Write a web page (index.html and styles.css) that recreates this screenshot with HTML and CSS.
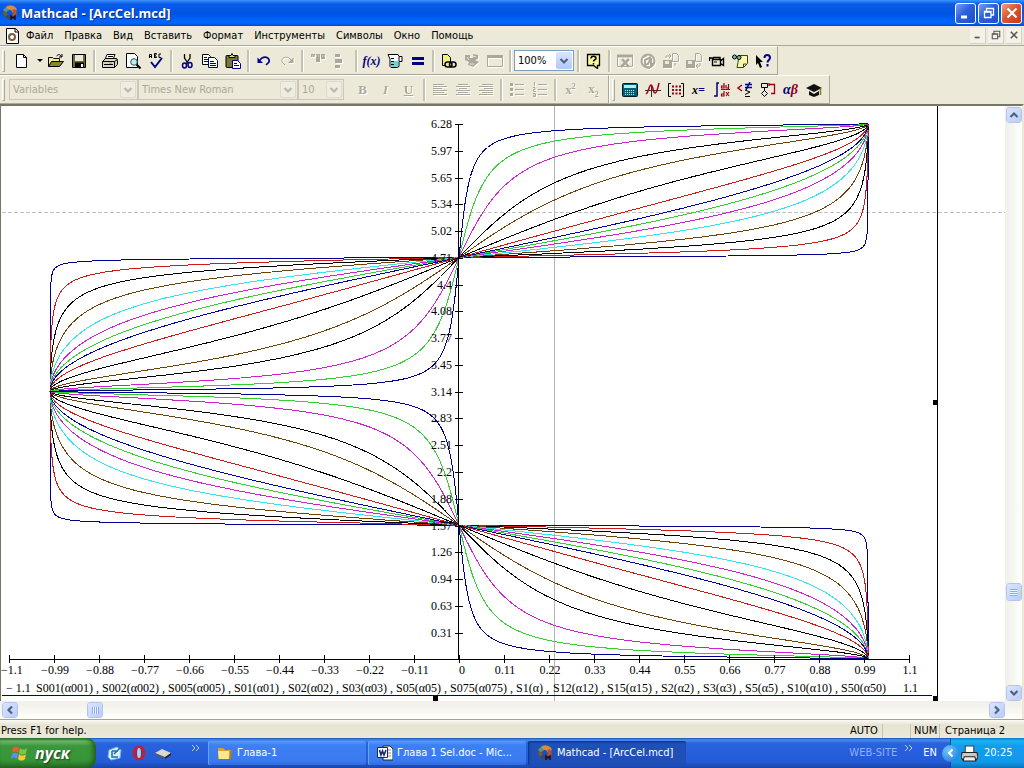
FILE: index.html
```html
<!DOCTYPE html>
<html lang="ru">
<head>
<meta charset="utf-8">
<title>Mathcad - [ArcCel.mcd]</title>
<link rel="stylesheet" href="styles.css">
</head>
<body>
<svg class="defs" aria-hidden="true">
  <symbol id="logo" viewBox="0 0 16 16">
    <path d="M3 12C0 8 1 3 5 2l3 3C5 5 4 8 6 10z" fill="#7a5a30"/>
    <path d="M4 2c4-3 10-1 11 3l-4 3C10 5 8 4 6 5z" fill="#e08b3c"/>
    <path d="M13 4c2 2 2 5 1 8l-4-2c1-1 2-3 0-5z" fill="#b8542c"/>
    <path d="M1 5l3-3 3 3-3 2z" fill="#4f9c8a"/>
    <path d="M3 11c1 3 4 4 7 3l-1-3c-1 0-2 0-3-1z" fill="#3c4a58"/>
    <path d="M9 15v-4l2 2 2-2v4" fill="none" stroke="#201008" stroke-width="1.500"/>
  </symbol>
  <symbol id="down" viewBox="0 0 10 10"><path d="M1.500 3L5 6.500 8.500 3" fill="none" stroke="currentColor" stroke-width="2.200"/></symbol>
  <symbol id="restore" viewBox="0 0 12 12"><path d="M3.500 4V1.500h7V8H8M3 1.500h8M1.500 4.500h6.500v6H1.500zM1 5h7" fill="none" stroke="currentColor" stroke-width="1.300"/></symbol>
  <symbol id="cross" viewBox="0 0 12 12"><path d="M1.500 1.500l9 9M10.500 1.500l-9 9" stroke="currentColor" stroke-width="2.200"/></symbol>
  <symbol id="more" viewBox="0 0 10 8"><path d="M1 1l3 3-3 3M5 1l3 3-3 3" fill="none" stroke="currentColor"/></symbol>
</svg>

<div class="window">
  <header class="titlebar">
    <svg class="ico"><use href="#logo"/></svg>
    <h1 class="title">Mathcad - [ArcCel.mcd]</h1>
    <button class="cap" aria-label="Свернуть"><svg viewBox="0 0 12 12"><path d="M1 10h6" stroke="#fff" stroke-width="3"/></svg></button>
    <button class="cap" aria-label="Восстановить"><svg><use href="#restore"/></svg></button>
    <button class="cap cap-close" aria-label="Закрыть"><svg><use href="#cross"/></svg></button>
  </header>

  <nav class="menubar">
    <svg class="ico" viewBox="0 0 16 16"><path d="M2.500.5h9l3 3v12h-12z" fill="#fff" stroke="#000"/><path d="M11 0v4h4" fill="none" stroke="#000"/><circle cx="8" cy="9" r="3" fill="none" stroke="#8a5a36" stroke-width="2"/><path d="M5 8l2-2" stroke="#4b7d70" stroke-width="2"/></svg>
    <button>Файл</button><button>Правка</button><button>Вид</button><button>Вставить</button><button>Формат</button><button>Инструменты</button><button>Символы</button><button>Окно</button><button>Помощь</button>
    <span class="fill"></span>
    <button class="mdi" aria-label="Свернуть документ"><svg viewBox="0 0 12 12"><path d="M2 9h6" stroke="currentColor" stroke-width="2"/></svg></button>
    <button class="mdi" aria-label="Восстановить документ"><svg><use href="#restore"/></svg></button>
    <button class="mdi" aria-label="Закрыть документ"><svg viewBox="-1 -1 14 14"><use href="#cross" width="12" height="12"/></svg></button>
  </nav>

  <div class="row">
    <div class="toolbar">
      <span class="grip"></span>
      <button class="tb" aria-label="Создать"><svg viewBox="0 0 16 16"><path d="M3.500 1.500h7l3 3v10h-10z" fill="#fff" stroke="#000"/><path d="M10.500 1.500v3h3" fill="none" stroke="#000"/></svg></button>
      <button class="tb drop" aria-label="Шаблоны"><svg viewBox="0 0 16 16"><path d="M5 6h6L8 9z"/></svg></button>
      <button class="tb" aria-label="Открыть"><svg viewBox="0 0 16 16"><path d="M.5 13.500v-9h4l1 1h6v3" fill="#f4ef8c" stroke="#000"/><path d="M.5 13.500l3-5h12l-4 5z" fill="#86862a" stroke="#000"/><path d="M8.500 3c2-2 4-2 5 1M11 4h3V1" fill="none" stroke="#000"/></svg></button>
      <button class="tb" aria-label="Сохранить"><svg viewBox="0 0 16 16"><path d="M1.500 1.500h13v13h-13z" fill="#6b6b35" stroke="#000"/><path d="M4 2h8v6H4z" fill="#e8e8dc"/><path d="M4 9.500h9v5H4z"/><path d="M10 11h2v3h-2z" fill="#fff"/></svg></button>
      <span class="sep"></span>
      <button class="tb" aria-label="Печать"><svg viewBox="0 0 16 16"><path d="M5 1.500h8l-2 5H3z" fill="#fff" stroke="#000"/><path d="M.5 8.500l3-3h11l1 2v4l-3 3H.5z" fill="#d5d3c4" stroke="#000"/><path d="M1 8.500h11.500v6M12.500 8.500l3-2M6 3.500h5M5 5.500h5M2 11.500h9" fill="none" stroke="#000"/><path d="M7 10h3" stroke="#aaa500"/></svg></button>
      <button class="tb" aria-label="Просмотр"><svg viewBox="0 0 16 16"><path d="M1.500.5h8l3 3v11h-11z" fill="#fff" stroke="#000"/><circle cx="9" cy="9" r="3.300" fill="#b8f0f0" stroke="#25555a"/><path d="M11.500 11.500l4 4" stroke="#000" stroke-width="2"/></svg></button>
      <button class="tb" aria-label="Орфография"><svg viewBox="0 0 16 16"><path d="M1.500 5V1.500h2V5M1.500 3.500h2M6.500 5V.5h2l-1 2 1 2h-2M13 1h-2v3.500h2" fill="none" stroke="#000"/><path d="M3 9l4 5 7-9" fill="none" stroke="#000088" stroke-width="2"/></svg></button>
      <span class="sep"></span>
      <button class="tb" aria-label="Вырезать"><svg viewBox="0 0 16 16"><path d="M5.500 1v4l4 6M11 1v4l-4 6" fill="none" stroke="#000" stroke-width="1.300"/><ellipse cx="5.500" cy="12.500" rx="2" ry="2.500" fill="none" stroke="#000088" stroke-width="1.500"/><ellipse cx="11" cy="12" rx="2" ry="2.500" fill="none" stroke="#000088" stroke-width="1.500"/></svg></button>
      <button class="tb" aria-label="Копировать"><svg viewBox="0 0 16 16"><path d="M.5 1.500h6l2 2v8h-8z" fill="#fff" stroke="#000"/><path d="M6.500 4.500h6l3 3v7h-9z" fill="#fff" stroke="#000088"/><path d="M2 4.500h3M2 6.500h4M2 8.500h4M8 8.500h4M8 10.500h6M8 12.500h6" stroke="#000088"/></svg></button>
      <button class="tb" aria-label="Вставка"><svg viewBox="0 0 16 16"><rect x="1" y="2.500" width="12" height="12" rx="1" fill="#77773a" stroke="#000"/><path d="M4 4.500V2.500h2l1-2 1 2h2v2z" fill="#e9e48a" stroke="#000"/><path d="M7.500 7.500h5l3 3v5h-8z" fill="#fff" stroke="#000088"/><path d="M9 10.500h3M9 12.500h5" stroke="#000088"/></svg></button>
      <span class="sep"></span>
      <button class="tb" aria-label="Отменить"><svg viewBox="0 0 16 16"><path d="M3 8l3-3c4-2 8 0 7 4l-3 3" fill="none" stroke="#000088" stroke-width="1.600"/><path d="M1.500 4.500V10H7z" fill="#000088"/></svg></button>
      <button class="tb off" aria-label="Повторить"><svg viewBox="0 0 16 16"><path d="M13 8l-3-3C6 3 2 5 3 9l3 3" fill="none" stroke="currentColor"/><path d="M14.500 4.500V10H9z" fill="currentColor"/></svg></button>
      <span class="sep"></span>
      <button class="tb off" aria-label="По горизонтали"><svg viewBox="0 0 16 16"><path d="M1 1h4v3H1zM6 1h4v8H6zM11 1h4v5h-4z" fill="currentColor"/><path d="M0 3h16" stroke="#ece9d8" stroke-dasharray="1 1"/></svg></button>
      <button class="tb off" aria-label="По вертикали"><svg viewBox="0 0 16 16"><path d="M2 1h5v3H2zM2 6h7v4H2zM2 12h5v3H2z" fill="currentColor"/></svg></button>
      <span class="sep"></span>
      <button class="tb fx" aria-label="Вставить функцию">f(x)</button>
      <button class="tb" aria-label="Единицы"><svg viewBox="0 0 16 16"><path d="M1 1.500h10l1 2h3v5h-3v5l-2 1H4l-1-1V6z" fill="#fff" stroke="#000"/><path d="M4 8h7v6H4z" fill="#60d8e0"/><path d="M4 5.500h3M4 8.500h3M4 11.500h3M12 4v4" stroke="#000"/></svg></button>
      <button class="tb" aria-label="Вычислить"><svg viewBox="0 0 16 16"><path d="M2 5.500h12M2 10.500h12" stroke="#000080" stroke-width="3"/></svg></button>
      <span class="sep"></span>
      <button class="tb" aria-label="Гиперссылка"><svg viewBox="0 0 16 16"><path d="M1.500 1.500h5l3 3v8h-8z" fill="#f6ee7a" stroke="#000"/><rect x="4" y="9" width="7" height="5" rx="2.500" fill="#eee9a8" stroke="#000" stroke-width="1.500"/><rect x="8.500" y="9" width="6.500" height="5" rx="2.500" fill="none" stroke="#000" stroke-width="1.500"/></svg></button>
      <button class="tb off" aria-label="Компонент"><svg viewBox="0 0 16 16"><path d="M1 2h5v3h3V1l5 1v4l-3 1 4 2-6 5-5-2 1-3-4-2z" fill="currentColor"/><path d="M3 4l2 3M9 3l3 1M6 11h4" stroke="#ece9d8" fill="none"/></svg></button>
      <button class="tb off" aria-label="Область"><svg viewBox="0 0 16 16"><path d="M.5 2.500h15v11H.5z" fill="none" stroke="currentColor"/><path d="M0 3.500h16" stroke="currentColor" stroke-width="3"/></svg></button>
      <span class="sep"></span>
      <label class="combo zoom"><select aria-label="Масштаб"><option>100%</option></select><span class="arrow"><svg><use href="#down"/></svg></span></label>
      <span class="sep"></span>
      <button class="tb" aria-label="Ресурсы"><svg viewBox="0 0 16 16"><path d="M1.500 1.500h12v11h-2v3l-4-3h-6z" fill="#fbf8a0" stroke="#000" stroke-width="1.300"/><path d="M5 5.500c0-3 5-3 5 0 0 1.500-2.500 1-2.500 3M7.500 10v1.500" fill="none" stroke="#000" stroke-width="1.500"/></svg></button>
      <span class="sep"></span>
      <button class="tb off" aria-label="Excel"><svg viewBox="0 0 16 16"><path d="M.5 2.500h15v11H.5z" fill="none" stroke="currentColor"/><path d="M0 3h16" stroke="currentColor" stroke-width="3"/><path d="M5 6l7 8M12 6l-8 8" stroke="currentColor" stroke-width="2.500"/></svg></button>
      <button class="tb off" aria-label="Axum"><svg viewBox="0 0 16 16"><circle cx="8" cy="8" r="6.500" fill="none" stroke="currentColor" stroke-width="2"/><path d="M11 4L5 7v5l3-1 3-6v7l3-2M3 4l4-2M5 14l5 1" fill="none" stroke="currentColor" stroke-width="2"/></svg></button>
      <button class="tb off" aria-label="Чтение файла"><svg viewBox="0 0 16 16"><path d="M0 7h9v8H0z" fill="currentColor"/><path d="M2 8h4v3H2z" fill="#ece9d8"/><path d="M9.500.5h4l2 2v6h-6zM3 5V3h5M6 1l2 2-2 2M12 10v3" fill="none" stroke="currentColor"/></svg></button>
      <button class="tb off" aria-label="Запись файла"><svg viewBox="0 0 16 16"><path d="M0 7h9v8H0z" fill="currentColor"/><path d="M2 8h4v3H2z" fill="#ece9d8"/><path d="M9.500.5h4l2 2v6h-6zM14 10v3h-4M12 11l-2 2 2 2" fill="none" stroke="currentColor"/></svg></button>
      <button class="tb" aria-label="Камера"><svg viewBox="0 0 16 16"><path d="M3.500 6.500h8v6h-8zM1 5h4M.5 4v4M11.500 8l3-2.500v7l-3-2M4 4.500h7v2" fill="none" stroke="#000" stroke-width="1.400"/><path d="M5 8h3v2H5z" fill="#808040"/></svg></button>
      <button class="tb" aria-label="Просмотр заметок"><svg viewBox="0 0 16 16"><path d="M7 2.500h8.500v8l-4 4H5l1-5z" fill="#fbf7a2" stroke="#3d3d20"/><path d="M11.500 14v-3h3" fill="none" stroke="#3d3d20"/><circle cx="2.500" cy="4" r="2" fill="#75c4ae" stroke="#000"/><circle cx="7" cy="4.500" r="2" fill="#75c4ae" stroke="#000"/></svg></button>
      <button class="tb" aria-label="Справка"><svg viewBox="0 0 16 16"><path d="M1 2l7 7H5l2 5-2 1-2-5-2 2z"/><path d="M9.500 5c0-4 5.500-4 5.500 0 0 2-2.500 2-2.500 4.500M12.500 11v2.500" fill="none" stroke="#000088" stroke-width="2"/></svg></button>
    </div>
  </div>

  <div class="row">
    <div class="toolbar">
      <span class="grip"></span>
      <label class="combo off style"><select disabled aria-label="Стиль"><option>Variables</option></select><span class="arrow"><svg><use href="#down"/></svg></span></label>
      <label class="combo off font"><select disabled aria-label="Шрифт"><option>Times New Roman</option></select><span class="arrow"><svg><use href="#down"/></svg></span></label>
      <label class="combo off size"><select disabled aria-label="Размер"><option>10</option></select><span class="arrow"><svg><use href="#down"/></svg></span></label>
      <span class="gap"></span>
      <button class="tb off glyph">B</button><button class="tb off glyph it">I</button><button class="tb off glyph un">U</button>
      <span class="sep"></span>
      <button class="tb off" aria-label="По левому краю"><svg viewBox="0 0 16 16"><path d="M1 2.500h11M1 4.500h14M1 6.500h9M1 8.500h14M1 10.500h11M1 12.500h14" stroke="currentColor"/></svg></button>
      <button class="tb off" aria-label="По центру"><svg viewBox="0 0 16 16"><path d="M3 2.500h10M1 4.500h14M4 6.500h8M1 8.500h14M3 10.500h10M1 12.500h14" stroke="currentColor"/></svg></button>
      <button class="tb off" aria-label="По правому краю"><svg viewBox="0 0 16 16"><path d="M4 2.500h11M1 4.500h14M6 6.500h9M1 8.500h14M4 10.500h11M1 12.500h14" stroke="currentColor"/></svg></button>
      <span class="sep"></span>
      <button class="tb off" aria-label="Маркеры"><svg viewBox="0 0 16 16"><path d="M1 1h3v3H1zM1 6h3v3H1zM1 11h3v3H1z" fill="currentColor"/><path d="M6 2.500h9M6 7.500h9M6 12.500h9" stroke="currentColor"/></svg></button>
      <button class="tb off" aria-label="Нумерация"><svg viewBox="0 0 16 16"><path d="M2.500 0v4M1 5.500h2v2H1.500v2H4M1 11.500h2.500v3H1M1 13h2M6 2.500h9M6 7.500h9M6 12.500h9" fill="none" stroke="currentColor"/></svg></button>
      <span class="sep"></span>
      <button class="tb off glyph plain" aria-label="Верхний индекс">x<sup>2</sup></button><button class="tb off glyph plain" aria-label="Нижний индекс">x<sub>2</sub></button>
    </div>
    <div class="toolbar math">
      <span class="grip"></span>
      <button class="tb" aria-label="Калькулятор"><svg viewBox="0 0 16 16"><rect x=".5" y="1.500" width="15" height="13" rx="1" fill="#00607c" stroke="#001c30"/><path d="M2 3h12v3H2z" fill="#b8ecea"/><path d="M3 8.500h10M3 10.500h10M3 12.500h10" stroke="#a8ecf0" stroke-dasharray="1 1"/></svg></button>
      <button class="tb" aria-label="График"><svg viewBox="0 0 16 16"><path d="M0 8.500h16M6.500 3v12" stroke="#303030"/><path d="M1 12c3-2 3-9 5-9s2 8 4 8 3-6 4-10" fill="none" stroke="#a00018" stroke-width="1.500"/></svg></button>
      <button class="tb" aria-label="Матрица"><svg viewBox="0 0 16 16"><path d="M3 1.500H.5v13H3M13 1.500h2.500v13H13" fill="none" stroke="#000"/><path d="M4 4.500h9M4 8h9M4 11.500h9" stroke="#900018" stroke-width="2" stroke-dasharray="2 1.500"/></svg></button>
      <button class="tb glyph eq" aria-label="Вычисление">x<span>=</span></button>
      <button class="tb" aria-label="Исчисление"><svg viewBox="0 0 16 16"><path d="M5 1H3v13H0" fill="none" stroke="#000080" stroke-width="1.500"/><path d="M7 7.500h9M10 1v5H7.500V4H10M12 3v3h2.500M14.500 2v5M10 9v5H7.500v-2H10M12 10l3 4M15 10l-3 4" fill="none" stroke="#a00018" stroke-width="1.200"/></svg></button>
      <button class="tb" aria-label="Логика"><svg viewBox="0 0 16 16"><path d="M5 3L1 6l4 3" fill="none" stroke="#a00018" stroke-width="1.500"/><path d="M8 2.500h7M8 5.500h7M13 0L9 8" stroke="#000080" stroke-width="1.500"/><path d="M8 8l5 2-5 2.500M8 14.500h5" fill="none" stroke="#000"/></svg></button>
      <button class="tb" aria-label="Программирование"><svg viewBox="0 0 16 16"><path d="M1.500 1.500h6v4h-6zM4.500 5.500V9M4.500 8.500l3 3-3 3-3-3z" fill="none" stroke="#000"/><path d="M9 2.500h5.500v9H11M9 1v3" fill="none" stroke="#a00018" stroke-width="1.300"/></svg></button>
      <button class="tb glyph greek" aria-label="Греческий алфавит">α<span>β</span></button>
      <button class="tb" aria-label="Символьная алгебра"><svg viewBox="0 0 16 16"><path d="M0 6l8-4 8 4-8 4zM3 9l5 3 5-3v4l-5 2-5-2z" fill="#111"/><path d="M14.500 6v7" stroke="#808030" stroke-width="1.500"/></svg></button>
    </div>
  </div>

  <main class="document">
    <svg class="plot" role="img" aria-label="График семейства кривых S(α)">
      <path class="guide" d="M554.500 0V596"/>
      <path class="guide pagebreak" d="M2 106.500H1005"/>
      <g id="curves" class="curves"></g>
      <path id="axes" class="axis"/>
      <g id="labels" class="labels"></g>
      <path class="under" d="M2 589.500H932"/>
      <path class="axis" d="M937.500 0V592"/>
      <path d="M933 294h5v5h-5zM933 590h5v5h-5zM433 590h5v5h-5z"/>
    </svg>
    <div class="vscroll">
      <button class="sb" aria-label="Вверх"><svg class="up"><use href="#down"/></svg></button>
      <span class="before"></span>
      <button class="sb thumb" aria-label="Ползунок"></button>
      <span class="after"></span>
      <button class="sb" aria-label="Вниз"><svg><use href="#down"/></svg></button>
    </div>
    <div class="hscroll">
      <button class="sb" aria-label="Влево"><svg class="left"><use href="#down"/></svg></button>
      <span class="before"></span>
      <button class="sb thumb" aria-label="Ползунок"></button>
      <span class="after"></span>
      <button class="sb" aria-label="Вправо"><svg class="right"><use href="#down"/></svg></button>
    </div>
  </main>

  <footer class="status"><span class="fill">Press F1 for help.</span><span class="cell auto">AUTO</span><span class="cell blank"></span><span class="cell num">NUM</span><span class="page">Страница 2</span></footer>

  <div class="taskbar">
    <button class="start"><svg viewBox="0 0 18 18"><path d="M2 4c2-2 4-2 6 0L7 9C5 7 3 7 1 9z" fill="#ef5b2b"/><path d="M9 4c2 2 5 2 7 0l-1 5c-2 2-5 2-7 0z" fill="#7fc742"/><path d="M1 10c2-2 4-2 6 0l-1 5c-2-2-4-2-6 0z" fill="#5b8ff0"/><path d="M8 10c2 2 5 2 7 0l-1 5c-2 2-5 2-7 0z" fill="#fbc92f"/></svg>пуск</button>
    <div class="quick">
      <button aria-label="Рабочий стол"><svg viewBox="0 0 16 16"><path d="M2 5l8-3 4 3-1 8-9 2-3-3z" fill="#dcf0fb" stroke="#6fb3ea"/><path d="M5 6h6M5 6v6h6M7 9l7-7" fill="none" stroke="#1b6fa8" stroke-width="1.500"/></svg></button>
      <button aria-label="Opera"><svg viewBox="0 0 16 16"><ellipse cx="8" cy="8" rx="5" ry="6" fill="#34488c" stroke="#c0203a" stroke-width="3"/><ellipse cx="8" cy="8" rx="2" ry="5" fill="#b9c6ee"/></svg></button>
      <button aria-label="Устройство"><svg viewBox="0 0 16 16"><path d="M0 8l7-4 9 4-6 5z" fill="#d9d9d2"/><path d="M0 8l10 4v2L1 10z" fill="#555"/><path d="M10 12l6-4v2l-6 4z" fill="#222"/></svg></button>
    </div>
    <svg class="more"><use href="#more"/></svg>
    <div class="tasks">
      <button class="task"><svg viewBox="0 0 16 16"><path d="M1 3h5l2 2h6v9H1z" fill="#d8a62c"/><path d="M1 6h11l1 8H2z" fill="#ffe98a"/><path d="M13 6h2l-1 8h-2z" fill="#a8801c"/></svg><span>Глава-1</span></button>
      <button class="task"><svg viewBox="0 0 16 16"><path d="M6 1h7l3 3v11H6z" fill="#fff" stroke="#222"/><path d="M8 5h6M8 8h6M8 11h6" stroke="#888"/><path d="M.5 2.500h10v10H.5z" fill="#fff" stroke="#15277a"/><path d="M2.500 5l1.500 5 1.500-4L7 10l2-5" fill="none" stroke="#15277a" stroke-width="1.600"/></svg><span>Глава 1 Sel.doc - Mic...</span></button>
      <button class="task active"><svg><use href="#logo"/></svg><span>Mathcad - [ArcCel.mcd]</span></button>
    </div>
    <span class="website">WEB-SITE</span>
    <svg class="more"><use href="#more"/></svg>
    <button class="lang">EN</button>
    <div class="tray">
      <button class="round" aria-label="Показать значки"><svg viewBox="0 0 10 10"><path d="M6.500 1.500L3 5l3.500 3.500" fill="none" stroke="#fff" stroke-width="2"/></svg></button>
      <svg class="printer" viewBox="0 0 16 16"><path d="M4 1h8v6H4z" fill="#fff" stroke="#444"/><path d="M1 7h14l1 5-2 2H2l-2-2z" fill="#c9c9cc" stroke="#222"/><path d="M3 11h10l1 4H2z" fill="#eee" stroke="#222"/></svg>
      <time>20:25</time>
    </div>
  </div>
</div>
<script src="plot.js"></script>
</body>
</html>
```
FILE: styles.css
```css
* { box-sizing: border-box; }
body {
  margin: 0;
  font-family: "DejaVu Sans Condensed", "Noto Sans", sans-serif;
  font-size: 11px;
  line-height: 14px;
  color: #000;
  background: #ece9d8;
}
button, select { font: inherit; color: inherit; margin: 0; }
button { border: 0; padding: 0; background: none; white-space: nowrap; }
svg { flex: none; display: block; }
.defs { width: 0; height: 0; position: absolute; }
.fill { flex: 1; }
.ico { width: 16px; height: 16px; }
.window { height: 100vh; display: flex; flex-direction: column; overflow: hidden; }

.titlebar {
  height: 26px; flex: none; display: flex; align-items: center; gap: 2px; padding: 0 2px 0 2px;
  background: linear-gradient(#3a93ff 0, #0a5ce8 4px, #0054e3 14px, #0063fa 20px, #0066ff 23px, #0148c8 26px);
}
.title {
  flex: 1; margin: 0; padding-left: 1px; color: #fff; text-shadow: 1px 1px #0b2c88;
  font: bold 13px/18px "Open Sans", "Noto Sans", sans-serif;
}
.cap {
  width: 21px; height: 21px; display: grid; place-items: center; border: 1px solid #fff; border-radius: 3px;
  color: #fff; background: linear-gradient(135deg, #7c9ff0, #2b5fdc 45%, #1c4fcf);
}
.cap svg { width: 12px; height: 12px; }
.cap-close { background: linear-gradient(135deg, #f0a080, #dd5630 45%, #c43a14); }

.menubar {
  height: 20px; flex: none; display: flex; align-items: center; gap: 11px; padding: 0 2px 0 4px;
  border-bottom: 1px solid #aca899;
}
.menubar .ico { margin-right: -5px; }
.menubar .mdi {
  width: 16px; height: 16px; margin-left: -9px; display: grid; place-items: center;
  color: #555; background: #f3f1e8; border-right: 1px solid #d5d2c2; border-bottom: 1px solid #d5d2c2;
}
.mdi svg { width: 10px; height: 10px; }

.row { height: 29px; flex: none; display: flex; }
.toolbar {
  display: flex; align-items: center; padding: 0 3px 0 2px;
  border-top: 1px solid #fff; border-right: 1px solid #aca899; border-bottom: 1px solid #aca899;
}
.math { padding-left: 2px; padding-right: 4px; border-left: 1px solid #fff; }
.grip { width: 3px; height: 22px; margin-right: 4px; border: 1px solid; border-color: #fff #aca899 #aca899 #fff; }
.math .grip { margin-right: 3px; }
.tb { width: 23px; height: 22px; flex: none; display: grid; place-items: center; }
.tb svg { width: 16px; height: 16px; }
.tb.drop { width: 12px; }
.tb.off { color: #aca899; filter: drop-shadow(1px 1px #fff); }
.sep { width: 8px; height: 22px; flex: none; display: flex; justify-content: center; }
.sep::before { content: ""; width: 2px; background: #c5c2b2; border-right: 1px solid #fff; }
.gap { width: 7px; }
.fx { font: italic bold 12px/16px "Liberation Serif", serif; color: #000080; }
.glyph { font: bold 13px/16px "Liberation Serif", serif; }
.it { font-style: italic; }
.un { text-decoration: underline; }
.plain { display: block; }
.plain sup, .plain sub { font-size: 8px; line-height: 8px; }
.eq { display: flex; align-items: center; justify-content: center; font-style: italic; font-size: 12px; }
.eq span { color: #000080; }
.greek { display: flex; align-items: center; justify-content: center; font-style: italic; font-size: 14px; color: #000080; }
.greek span { color: #900018; }

.combo { height: 21px; display: flex; align-items: stretch; background: #fff; border: 1px solid #7f9db9; }
.combo select {
  flex: 1; min-width: 0; padding: 0 3px; border: 0; appearance: none; background: none; outline: 0; opacity: 1;
}
.combo .arrow {
  width: 16px; margin: 1px; display: grid; place-items: center; border-radius: 2px; pointer-events: none;
  color: #4d6185; background: linear-gradient(#dbe5fe, #b4c8f6);
}
.arrow svg, .sb svg { width: 10px; height: 10px; }
.zoom { width: 60px; }
.style { width: 129px; }
.font { width: 160px; }
.size { width: 46px; }
.combo.off { background: #ece9d8; border-color: #c9c7ba; color: #aca899; }
.combo.off .arrow { color: #bcb9aa; background: #efede1; border: 1px solid #dddacb; }

.document {
  flex: 1; min-height: 0; display: grid; grid-template: 1fr 18px / 1fr 17px;
  border-top: 2px solid #77746a; border-right: 2px solid #ece9d8; background: #fff; box-shadow: inset 1px 0 #77746a;
}
.plot { width: 100%; height: 100%; min-height: 0; overflow: hidden; }
.plot path { shape-rendering: crispEdges; }
.guide { stroke: #b4b4b4; }
.pagebreak { stroke: #c0c0c0; stroke-dasharray: 4 2; }
.axis { fill: none; stroke: #000; }
.under { stroke: #000080; }
.curves path { fill: none; stroke-width: 1; }
.labels { font: 12px "Liberation Serif", serif; }
.vscroll { display: flex; flex-direction: column; align-items: center; padding: 1px 0 0; background: linear-gradient(90deg, #f0efe8, #fefefb); }
.hscroll { grid-column: 1 / 3; display: flex; align-items: center; padding: 0 17px 0 2px; background: linear-gradient(#f0efe8, #fefefb); }
.sb {
  width: 16px; height: 16px; flex: none; display: grid; place-items: center; border: 1px solid #fff; border-radius: 3px;
  outline: 1px solid #b3c5ee; outline-offset: -1px; color: #4d6185; background: linear-gradient(135deg, #dbe5fe, #b9ccf8);
}
.thumb::before { content: ""; width: 7px; height: 7px; background: repeating-linear-gradient(90deg, #8fabec 0 1px, #eef3ff 1px 2px); }
.vscroll .thumb { height: 18px; }
.vscroll .thumb::before { background: repeating-linear-gradient(#8fabec 0 1px, #eef3ff 1px 2px); }
.vscroll .before { flex: 460; }
.vscroll .after { flex: 84; }
.hscroll .before { flex: 69; }
.hscroll .after { flex: 885; }
.up { transform: rotate(180deg); }
.left { transform: rotate(90deg); }
.right { transform: rotate(-90deg); }

.status {
  height: 19px; flex: none; display: flex; align-items: center; padding: 3px 1px 0; border-top: 1px solid #a5a294;
  background: linear-gradient(#fbfaf4, #e6e3d2 5px, #ece9d8);
}
.cell { height: 14px; border-right: 1px solid #c8c5b4; }
.auto { width: 33px; }
.blank { width: 28px; }
.num { width: 29px; padding-left: 3px; }
.page { width: 83px; padding-left: 5px; }

.taskbar {
  height: 30px; flex: none; display: flex; align-items: center; color: #fff;
  background: linear-gradient(#1f4fb0 0, #4a8cf4 2px, #2a62dd 5px, #245bd8 24px, #1b44a6 30px);
}
.start {
  align-self: stretch; width: 96px; display: flex; align-items: center; gap: 6px; padding-left: 11px;
  border-radius: 0 9px 9px 0; box-shadow: inset -3px 0 5px #1f5d1f; text-shadow: 1px 1px 2px #153c15;
  background: linear-gradient(#2d772d 0, #6fbd6f 3px, #3c963c 8px, #379637 22px, #256a25 30px);
  font: italic bold 16px/20px "Open Sans", "Noto Sans", sans-serif;
}
.start svg { width: 18px; height: 18px; }
.quick { display: flex; gap: 8px; padding: 0 20px 0 11px; }
.quick svg { width: 16px; height: 16px; }
.more { width: 10px; height: 8px; align-self: flex-start; margin-top: 6px; color: #bcd3ff; }
.tasks { flex: 1; display: flex; gap: 2px; padding-left: 7px; }
.task {
  width: 158px; height: 24px; display: flex; align-items: center; gap: 4px; padding-left: 9px; border-radius: 2px;
  background: linear-gradient(#5c9bff, #3c80f3 4px, #3a7bef 20px, #2f6adf); box-shadow: inset 1px 0 #69a2ff;
}
.task svg { width: 16px; height: 16px; }
.active { background: #1e50b8; box-shadow: inset 1px 1px 2px #0c307c; }
.website { width: 55px; color: #8fb2f5; }
.lang { padding: 0 13px 0 9px; }
.tray {
  align-self: stretch; width: 74px; display: flex; align-items: center; gap: 2px;
  background: linear-gradient(#0c7cd0, #18b5f2 3px, #139ceb 8px, #129aea 24px, #0d70b8); border-left: 1px solid #0b4aa8;
}
.round { width: 17px; height: 17px; margin-left: -9px; display: grid; place-items: center; border-radius: 50%; background: radial-gradient(circle at 35% 30%, #6fc4ff, #1374dd); }
.round svg { width: 10px; height: 10px; }
.printer { width: 17px; height: 17px; }
.tray time { margin-left: 4px; }
```
FILE: plot.js
```js
// Family x = cos a / sqrt(cos^2 a + k^2 sin^2 a), a = 0 .. 2*pi, drawn as a against x.
const NS = "http://www.w3.org/2000/svg";
const X0 = 459, Y0 = 553, XS = 409, YS = 85.2;
const family = [
  [1 / 50, "#000090"], [1 / 10, "#d01818"], [1 / 5, "#000"], [1 / 3, "#6b4208"],
  [1 / 2, "#30e4f0"], [1 / 1.5, "#d020d0"], [1 / 1.2, "#30d030"], [1, "#0000a8"],
  [1 / 0.75, "#d01818"], [1 / 0.5, "#000"], [1 / 0.3, "#6b4208"], [1 / 0.2, "#000"],
  [1 / 0.1, "#d020d0"], [1 / 0.05, "#30d030"], [1 / 0.02, "#000090"]
];
const curves = document.getElementById("curves");
for (const [k, color] of family) {
  const points = [];
  for (let i = 0; i <= 1440; i++) {
    const a = i * Math.PI / 720;
    const c = Math.cos(a), s = Math.sin(a);
    points.push((X0 + XS * c / Math.hypot(c, k * s)).toFixed(1) + " " + (Y0 - YS * a).toFixed(1));
  }
  const path = document.createElementNS(NS, "path");
  path.setAttribute("d", "M" + points.join("L"));
  path.setAttribute("stroke", color);
  curves.append(path);
}

const labels = document.getElementById("labels");
function label(text, x, y, anchor) {
  const node = document.createElementNS(NS, "text");
  node.setAttribute("x", x);
  node.setAttribute("y", y);
  node.setAttribute("text-anchor", anchor);
  node.textContent = text;
  labels.append(node);
}

let axes = "M9 553.5H909M458.5 18V553";
const yValues = "6.28 5.97 5.65 5.34 5.02 4.71 4.4 4.08 3.77 3.45 3.14 2.83 2.51 2.2 1.88 1.57 1.26 0.94 0.63 0.31".split(" ");
yValues.forEach((value, i) => {
  const y = Math.round(18 + i * 26.77);
  axes += `M455 ${y + 0.5}H463`;
  label(value, 452, y + 4, "end");
});
const xValues = "−1.1 −0.99 −0.88 −0.77 −0.66 −0.55 −0.44 −0.33 −0.22 −0.11 0 0.11 0.22 0.33 0.44 0.55 0.66 0.77 0.88 0.99 1.1".split(" ");
xValues.forEach((value, i) => {
  const x = 9 + i * 45;
  axes += `M${x + 0.5} 549V557`;
  if (i === 0) label(value, 1, 568, "start");
  else label(value, i === 10 ? 462 : x + 1, 568, "middle");
});
document.getElementById("axes").setAttribute("d", axes);

label("− 1.1", 6, 586, "start");
const names = [
  ["S001(α001) ,", 36], ["S002(α002) ,", 102], ["S005(α005) ,", 168], ["S01(α01) ,", 234],
  ["S02(α02) ,", 288], ["S03(α03) ,", 342], ["S05(α05) ,", 396], ["S075(α075) ,", 450],
  ["S1(α) ,", 516], ["S12(α12) ,", 553], ["S15(α15) ,", 607], ["S2(α2) ,", 661],
  ["S3(α3) ,", 703], ["S5(α5) ,", 745], ["S10(α10) ,", 787], ["S50(α50)", 841]
];
for (const [text, x] of names) label(text, x, 586, "start");
label("1.1", 903, 586, "start");
```
